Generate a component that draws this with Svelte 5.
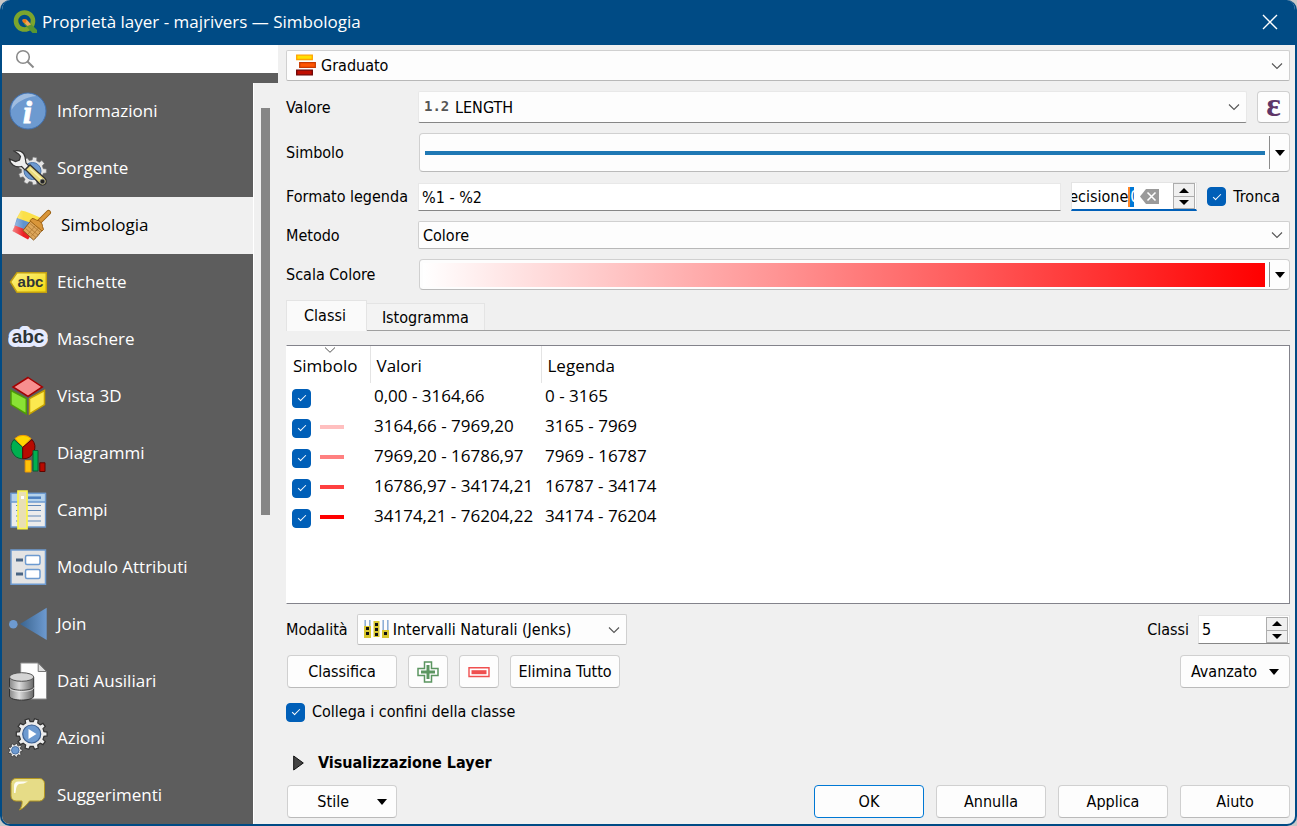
<script>
  const pages = [
    { id: "info", label: "Informazioni" },
    { id: "source", label: "Sorgente" },
    { id: "symbology", label: "Simbologia" },
    { id: "labels", label: "Etichette" },
    { id: "masks", label: "Maschere" },
    { id: "view3d", label: "Vista 3D" },
    { id: "diagrams", label: "Diagrammi" },
    { id: "fields", label: "Campi" },
    { id: "form", label: "Modulo Attributi" },
    { id: "joins", label: "Join" },
    { id: "aux", label: "Dati Ausiliari" },
    { id: "actions", label: "Azioni" },
    { id: "display", label: "Suggerimenti" },
  ];

  let current = $state("symbology");
  let tab = $state("classi");
  let search = $state("");
  let legendFormat = $state("%1 - %2");
  let precision = $state("0");
  let trim = $state(true);
  let linkBounds = $state(true);
  let classCount = $state(5);

  let classes = $state([
    { on: true, color: "#ffffff", values: "0,00 - 3164,66", legend: "0 - 3165" },
    { on: true, color: "#ffbfbf", values: "3164,66 - 7969,20", legend: "3165 - 7969" },
    { on: true, color: "#ff8080", values: "7969,20 - 16786,97", legend: "7969 - 16787" },
    { on: true, color: "#ff4040", values: "16786,97 - 34174,21", legend: "16787 - 34174" },
    { on: true, color: "#ff0000", values: "34174,21 - 76204,22", legend: "34174 - 76204" },
  ]);

  // outline of a cog with flat teeth
  function gear(cx, cy, outer, inner, teeth) {
    const pts = [];
    const step = (Math.PI * 2) / teeth;
    for (let i = 0; i < teeth; i++) {
      const a = i * step;
      for (const [k, r] of [[-0.3, inner], [-0.2, outer], [0.2, outer], [0.3, inner]]) {
        const t = a + k * step;
        pts.push(`${(cx + r * Math.cos(t)).toFixed(2)},${(cy + r * Math.sin(t)).toFixed(2)}`);
      }
    }
    return pts.join(" ");
  }
</script>

{#snippet chevron()}
  <svg class="chevron" viewBox="0 0 12 8" aria-hidden="true">
    <path d="M1 1.5 6 6.5 11 1.5" fill="none" stroke="#555" stroke-width="1.1" />
  </svg>
{/snippet}

{#snippet caret()}
  <svg class="caret" viewBox="0 0 10 6" aria-hidden="true"><path d="M0 0h10L5 6z" fill="#000" /></svg>
{/snippet}

{#snippet spinButtons(up, down)}
  <span class="spin-buttons">
    <button type="button" aria-label="Aumenta" onclick={up}>
      <svg viewBox="0 0 10 5" aria-hidden="true"><path d="M0 5h10L5 0z" /></svg>
    </button>
    <button type="button" aria-label="Diminuisci" onclick={down}>
      <svg viewBox="0 0 10 5" aria-hidden="true"><path d="M0 0h10L5 5z" /></svg>
    </button>
  </span>
{/snippet}

{#snippet pageIcon(id)}
  <svg class="page-icon" viewBox="0 0 40 41" aria-hidden="true">
    {#if id === "info"}
      <circle cx="20" cy="20" r="18" fill="#6d9ad0" stroke="#4272b0" />
      <path d="M3.5 19a16.5 16.5 0 0 1 25-14C18 6 8 11 3.5 19z" fill="#fff" opacity=".35" />
      <text x="19.5" y="32" text-anchor="middle" class="info-letter">i</text>
    {:else if id === "source"}
      <polygon points={gear(24.5, 23, 14, 11, 9)} fill="#e4e4e4" stroke="#777" stroke-width=".6" />
      <circle cx="24.5" cy="23" r="8.5" fill="#6d9ad0" stroke="#4b74a8" />
      <path d="M6 3c5-1.5 10 1 11 6l1 6 3 3-4 4-3.5-3.500C7 20 2 16 1.5 11l6 2.500 4-1.500 1-3.500-2-2.500z" fill="#eee" stroke="#333" stroke-width="1.2" />
      <path d="M17.5 21.5l4.500-4.500 15 13.500c2 2 1.500 5-.5 6s-4 .5-5-.8z" fill="#eadb7b" stroke="#333" stroke-width="1.3" />
      <path d="M22 20.5 34 31.5" stroke="#f8f0b0" stroke-width="1.5" />
      <circle cx="34.5" cy="33.5" r="2.3" fill="#222" stroke="#777" />
    {:else if id === "symbology"}
      <defs>
        <linearGradient id="flagFade"><stop offset="0" stop-color="#fff" stop-opacity=".45" /><stop offset=".4" stop-color="#fff" stop-opacity="0" /></linearGradient>
      </defs>
      <path d="M9 5.5c6 1 12 4 19 7l-3 9L4.500 13.500z" fill="#fbe04a" />
      <path d="M5 13l20 7-5 9L2.500 21z" fill="#5f93cf" />
      <path d="M3 20.5l18 7-5 7L.5 26z" fill="#ec2024" />
      <path d="M9 5.5c6 1 12 4 19 7L16 34.500.5 26z" fill="url(#flagFade)" />
      <path d="M25 19 36.5 7.5" stroke="#9a5f10" stroke-width="5" stroke-linecap="round" />
      <path d="M25 19 36.5 7.5" stroke="#d9963a" stroke-width="3.2" stroke-linecap="round" />
      <path d="M19 15.5 30.5 25c-3 3-5 7-9 10L11 25.500z" fill="#dda75c" stroke="#8a5a1c" />
      <path d="M20 13.5c3 0 4 2 6 2s5 4 4.500 6l1 3-1.500 1.500L18 15.800z" fill="#d9963a" stroke="#9a5f10" />
      <path d="M18 18.5 28 27M15.5 21 26 30M13.5 23.5 24 32.5M16 29l8-9M19 31.5l8-9" stroke="#a9732c" stroke-width=".7" />
    {:else if id === "labels"}
      <defs>
        <linearGradient id="tagFill" x2="1" y2="1"><stop stop-color="#fff38a" /><stop offset="1" stop-color="#f2d80a" /></linearGradient>
      </defs>
      <path d="M2.5 20 9 10.700h29.300v19.600H9z" fill="url(#tagFill)" stroke="#c3a010" stroke-width="1.5" />
      <text x="22.5" y="24.5" text-anchor="middle" class="abc small-abc">abc</text>
    {:else if id === "masks"}
      <text x="20" y="24" text-anchor="middle" class="abc mask-halo">abc</text>
      <text x="20" y="24" text-anchor="middle" class="abc">abc</text>
    {:else if id === "view3d"}
      <path d="M3 14.5 18.3 22.700V38L3 28.700z" fill="#8ae234" stroke="#4e9a06" stroke-width="1.5" />
      <path d="M36.5 14.5 21.5 22.700V38l15-9.300z" fill="#fce94f" stroke="#c4a000" stroke-width="1.5" />
      <path d="M20 1.5 34.3 11 20 20.300 5 11z" fill="#f78f8f" stroke="#a40000" stroke-width="1.5" />
    {:else if id === "diagrams"}
      <path d="M14.7 14.3 7 5.500a11.700 11.700 0 0 1 16 0z" fill="#ffd700" stroke="#f29b00" />
      <path d="M14.7 14.3 6 6.500a11.700 11.700 0 0 0 8.500 19.300z" fill="#00b050" stroke="#0a5c30" />
      <path d="M14.7 14.3 24 6.500a11.700 11.700 0 0 1-9.300 19.300z" fill="#b80a00" stroke="#5c0500" />
      <path d="M17.2 27.5h5.800v11.500h-5.800z" fill="#ffc20a" stroke="#f29b00" />
      <path d="M25 17.5h5v20.500h-5z" fill="#00b050" stroke="#0a5c30" />
      <path d="M31.8 29.8h5.200v8.700h-5.200z" fill="#b80a00" stroke="#5c0500" />
    {:else if id === "fields"}
      <path d="M3 3.3h34.500v33.700H3z" fill="#ececec" stroke="#6d9ad0" stroke-width="1.3" />
      <path d="M3 3.3h34.500v8.700H3z" fill="#b4d2ec" stroke="#6d9ad0" stroke-width="1.3" />
      <path d="M20 7.7h13" stroke="#4d80c0" stroke-width="2.5" />
      <path d="M8 15.5h25M8 20.5h25M8 26h25M8 31h25" stroke="#6088b8" stroke-width="1.2" />
      <path d="M10 1h9v37.700h-9z" fill="#e9dfb4" stroke="#fbf54b" stroke-width="1.7" />
      <path d="M13 6h3v3h-3z" fill="#fff" />
    {:else if id === "form"}
      <path d="M3 3h34.500v34.300H3z" fill="#e4e4e4" stroke="#6d9ad0" stroke-width="1.5" />
      <path d="M8 13h7M8 27h7" stroke="#4a6583" stroke-width="3" />
      <rect x="17.5" y="8.5" width="14.5" height="9" rx="1.5" fill="#fff" stroke="#6d9ad0" stroke-width="1.5" />
      <rect x="17.5" y="22.5" width="14.5" height="9" rx="1.5" fill="#fff" stroke="#6d9ad0" stroke-width="1.5" />
    {:else if id === "joins"}
      <defs>
        <linearGradient id="joinFill"><stop stop-color="#3a648f" /><stop offset="1" stop-color="#6d9ad0" /></linearGradient>
      </defs>
      <circle cx="5.3" cy="20.3" r="4.3" fill="#6d9ad0" />
      <path d="M12 20 38.7 3.700V36z" fill="url(#joinFill)" />
    {:else if id === "aux"}
      <defs>
        <linearGradient id="dbFill"><stop stop-color="#888" /><stop offset=".4" stop-color="#ddd" /><stop offset="1" stop-color="#666" /></linearGradient>
      </defs>
      <path d="M12.7 2h17.500L38.5 10.500V38H12.700z" fill="#fdfdfd" stroke="#8a8a8a" />
      <path d="M30.2 2v8.500h8.300z" fill="#ddd" stroke="#777" />
      <path d="M1.5 16v19c0 5.500 24.200 5.500 24.200 0V16z" fill="url(#dbFill)" stroke="#333" />
      <ellipse cx="13.6" cy="16" rx="12.1" ry="4.3" fill="#d4d4d4" stroke="#555" />
      <path d="M1.5 25.5c0 5 24.200 5 24.200 0" fill="none" stroke="#444" />
      <path d="M1.5 26.7c0 5 24.200 5 24.200 0" fill="none" stroke="#eee" stroke-width=".8" />
    {:else if id === "actions"}
      <polygon points={gear(23.7, 16, 15.5, 12.5, 10)} fill="#ececec" stroke="#333" stroke-width="1.2" />
      <circle cx="23.7" cy="16" r="9" fill="#6d9ad0" stroke="#3a5f92" stroke-width="1.2" />
      <path d="M20.5 11v10l8-5z" fill="#fff" />
      <polygon points={gear(7.3, 32.3, 7, 5.5, 9)} fill="#ececec" stroke="#333" stroke-width=".8" />
      <circle cx="7.3" cy="32.3" r="3.8" fill="#6d9ad0" stroke="#3a5f92" stroke-width=".8" />
    {:else if id === "display"}
      <path d="M8 3.5h23.500a5 5 0 0 1 5 5V21a5 5 0 0 1-5 5H21.500c-2.500 3.500-5.500 7-10 9 2-3 3-6 2.500-9H8a5 5 0 0 1-5-5V8.500a5 5 0 0 1 5-5z" fill="#e6dc87" stroke="#b39722" />
      <path d="M6 18V11q0-4.500 4.500-4.500h9.500q-4 2.500-9 2.500Q8 10 7.500 18z" fill="#fff" opacity=".9" />
    {/if}
  </svg>
{/snippet}

<div class="window">
  <header class="titlebar">
    <svg class="logo" viewBox="0 0 24 24" aria-hidden="true">
      <circle cx="11.5" cy="11" r="8.5" fill="none" stroke="#7ba52d" stroke-width="4.6" />
      <path d="M11 10.5 14.5 10.5 24 20v3h-4.500L11 14z" fill="#589632" />
      <path d="M9.5 9.5h4l4.500 5-3.500 1.500-5-5z" fill="#f0a35c" />
      <circle cx="11.5" cy="11" r="2" fill="#ee7913" />
    </svg>
    <h1>Proprietà layer - majrivers — Simbologia</h1>
    <button type="button" class="close" aria-label="Chiudi">
      <svg viewBox="0 0 16 16" aria-hidden="true"><path d="M1 1 15 15M15 1 1 15" stroke="#fff" stroke-width="1.4" /></svg>
    </button>
  </header>

  <div class="body">
    <aside>
      <label class="search">
        <svg viewBox="0 0 20 20" aria-hidden="true">
          <circle cx="8" cy="8" r="6.3" fill="none" stroke="#8a8a8a" stroke-width="1.6" />
          <path d="M12.5 12.5 18.5 18.5" stroke="#8a8a8a" stroke-width="2" />
        </svg>
        <input type="text" aria-label="Cerca" bind:value={search} />
      </label>
      <div class="list-area">
        <nav>
          {#each pages as page}
            <button
              type="button"
              class="page"
              class:selected={current === page.id}
              onclick={() => (current = page.id)}
            >
              {@render pageIcon(page.id)}
              <span>{page.label}</span>
            </button>
          {/each}
        </nav>
        <div class="scrollbar"><div class="thumb"></div></div>
      </div>
    </aside>

    <main>
      <div class="combo renderer">
        <svg class="combo-icon renderer-icon" viewBox="0 0 20 22" aria-hidden="true">
          <path d="M.7 1.2h15.600v4.300H.7z" fill="#ffe000" stroke="#ffa200" stroke-width="1.3" />
          <path d="M3.7 8.7h15.600v4.600H3.700z" fill="#ff5500" stroke="#c63a00" stroke-width="1.3" />
          <path d="M.7 16.2h15.600v4.600H.7z" fill="#c00d00" stroke="#6e0000" stroke-width="1.3" />
        </svg>
        <select aria-label="Tipo di simbolo"><option>Graduato</option></select>
        {@render chevron()}
      </div>

      <div class="form">
        <label class="label" for="value">Valore</label>
        <div class="row value-row">
          <div class="combo underlined">
            <span class="combo-icon type-icon" aria-hidden="true">1.2</span>
            <select id="value"><option>LENGTH</option></select>
            {@render chevron()}
          </div>
          <button type="button" class="btn epsilon" aria-label="Espressione">ε</button>
        </div>

        <span class="label">Simbolo</span>
        <div class="split symbol">
          <button type="button" class="preview" aria-label="Simbolo"><span class="line"></span></button>
          <button type="button" class="drop" aria-label="Menu simbolo">{@render caret()}</button>
        </div>

        <label class="label" for="legend">Formato legenda</label>
        <div class="row">
          <input id="legend" class="field" type="text" bind:value={legendFormat} />
          <div class="spin precision">
            <div class="precision-text">
              <label for="precision">Precisione</label>
              <input id="precision" type="text" bind:value={precision} />
            </div>
            <button type="button" class="clear" aria-label="Azzera">
              <svg viewBox="0 0 19 15" aria-hidden="true">
                <path d="M6 0h13v15H6L0 7.5z" fill="#9a9a9a" />
                <path d="M7.5 3.5l8 8M15.5 3.5l-8 8" stroke="#fff" stroke-width="1.6" />
              </svg>
            </button>
            {@render spinButtons(() => (precision = String(+precision + 1)), () => (precision = String(+precision - 1)))}
          </div>
          <label class="check trim"><input type="checkbox" bind:checked={trim} />Tronca</label>
        </div>

        <label class="label" for="method">Metodo</label>
        <div class="combo method">
          <select id="method"><option>Colore</option></select>
          {@render chevron()}
        </div>

        <span class="label">Scala Colore</span>
        <div class="split ramp">
          <button type="button" class="preview" aria-label="Scala Colore"><span class="gradient"></span></button>
          <button type="button" class="drop" aria-label="Menu scala colore">{@render caret()}</button>
        </div>
      </div>

      <div class="tabs" role="tablist">
        <button type="button" role="tab" aria-selected={tab === "classi"} onclick={() => (tab = "classi")}>Classi</button>
        <button type="button" role="tab" aria-selected={tab === "isto"} onclick={() => (tab = "isto")}>Istogramma</button>
      </div>

      <div class="table-box">
        <table>
          <thead>
            <tr>
              <th class="col-symbol">
                Simbolo
                <svg class="sort" viewBox="0 0 12 6" aria-hidden="true"><path d="M1 .5 6 5.3 11 .5" fill="none" stroke="#555" /></svg>
              </th>
              <th class="col-values">Valori</th>
              <th>Legenda</th>
            </tr>
          </thead>
          <tbody>
            {#each classes as c}
              <tr>
                <td>
                  <div class="symbol-cell">
                    <input type="checkbox" aria-label={c.legend} bind:checked={c.on} />
                    <span class="swatch" style="background: {c.color}"></span>
                  </div>
                </td>
                <td>{c.values}</td>
                <td>{c.legend}</td>
              </tr>
            {/each}
          </tbody>
        </table>
      </div>

      <div class="row mode-row">
        <label for="mode">Modalità</label>
        <div class="combo mode">
          <svg class="combo-icon mode-icon" viewBox="0 0 25 19" aria-hidden="true">
            <path d="M1.2 0v6M5.8 0v6M19.2 0v10M23.8 0v10" stroke="#8fb0d8" stroke-width="1.6" />
            <path d="M0 6h7v12H0zM9.5 1h6v16h-6zM18 10h7v8h-7z" fill="#d8c62e" />
            <path d="M2 7h3v3H2zM2 12h3v3H2zM11 3h3v3h-3zM11 8h3v3h-3zM11 13h3v3h-3zM20 12h3v3h-3z" fill="#111" />
          </svg>
          <select id="mode"><option>Intervalli Naturali (Jenks)</option></select>
          {@render chevron()}
        </div>
        <label class="push" for="count">Classi</label>
        <div class="spin count">
          <input id="count" type="text" bind:value={classCount} />
          {@render spinButtons(() => classCount++, () => classCount--)}
        </div>
      </div>

      <div class="row actions">
        <button type="button" class="btn wide">Classifica</button>
        <button type="button" class="btn icon-btn" aria-label="Aggiungi classe">
          <svg viewBox="0 0 22 22" aria-hidden="true">
            <path d="M7.5 1h7v6.500H21v7h-6.500V21h-7v-6.500H1v-7h6.500z" fill="#fff" stroke="#5b9560" stroke-width="1.5" />
            <path d="M11 4v14M4 11h14" stroke="#5b9560" stroke-width="3" />
          </svg>
        </button>
        <button type="button" class="btn icon-btn" aria-label="Elimina classe">
          <svg viewBox="0 0 22 22" aria-hidden="true">
            <path d="M1 6.8h20v8.700H1z" fill="#fff" stroke="#ef4f4f" stroke-width="1.4" />
            <path d="M3.5 11.2h15" stroke="#ef4f4f" stroke-width="4" />
          </svg>
        </button>
        <button type="button" class="btn wide">Elimina Tutto</button>
        <button type="button" class="btn wide push menu">Avanzato {@render caret()}</button>
      </div>

      <label class="check link"><input type="checkbox" bind:checked={linkBounds} />Collega i confini della classe</label>

      <button type="button" class="group">
        <svg viewBox="0 0 11 16" aria-hidden="true"><path d="M.7 1v14L10.3 8z" fill="#444" stroke="#111" /></svg>
        Visualizzazione Layer
      </button>

      <footer class="row actions">
        <button type="button" class="btn wide menu style">Stile {@render caret()}</button>
        <button type="button" class="btn wide push default">OK</button>
        <button type="button" class="btn wide">Annulla</button>
        <button type="button" class="btn wide">Applica</button>
        <button type="button" class="btn wide">Aiuto</button>
      </footer>
    </main>
  </div>
</div>

<style>
  :global(body) {
    margin: 0;
    background: #c8c8c8;
  }

  .window {
    --ui: "DejaVu Sans Condensed", "Noto Sans", sans-serif;
    --seg: "Open Sans", "Noto Sans", sans-serif;
    box-sizing: border-box;
    min-height: 100vh;
    display: flex;
    flex-direction: column;
    border: 2px solid #004b85;
    border-top: 0;
    border-radius: 10px;
    overflow: hidden;
    background: #f0f0f0;
    font: 16px/20px var(--ui);
    color: #000;
  }

  .window * {
    box-sizing: border-box;
  }

  button,
  input,
  select {
    font: inherit;
    color: inherit;
    margin: 0;
    padding: 0;
    border: 0;
    background: none;
    border-radius: 0;
    outline: none;
  }

  svg {
    display: block;
    flex: none;
  }

  .titlebar {
    display: flex;
    align-items: center;
    gap: 5px;
    height: 45px;
    padding: 0 17px 1px 11px;
    background: #004b85;
    color: #fff;
    font-family: var(--seg);
  }

  .logo {
    width: 24px;
    height: 24px;
  }

  h1 {
    flex: 1;
    margin: 0;
    font-size: 17px;
    font-weight: 400;
  }

  .close svg {
    width: 16px;
    height: 16px;
  }

  .body {
    flex: 1;
    display: flex;
  }

  aside {
    width: 276px;
    display: flex;
    flex-direction: column;
  }

  .search {
    display: flex;
    align-items: center;
    gap: 8px;
    height: 28px;
    padding-left: 13px;
    background: #fff;
  }

  .search svg {
    width: 20px;
    height: 20px;
  }

  .search input {
    flex: 1;
    min-width: 0;
  }

  .list-area {
    flex: 1;
    display: flex;
    border-top: 10px solid #5d5d5d;
  }

  nav {
    flex: 1;
    background: #5d5d5d;
  }

  .page {
    display: flex;
    align-items: center;
    gap: 9px;
    width: 100%;
    height: 57px;
    padding-left: 6px;
    color: #fff;
    font-family: var(--seg);
    font-size: 17px;
    text-align: left;
  }

  .page.selected {
    padding-left: 10px;
    background: #f0f0f0;
    color: #000;
  }

  .page span {
    padding-bottom: 1px;
  }

  .page-icon {
    width: 40px;
    height: 41px;
  }

  .info-letter {
    font: italic bold 32px "Liberation Serif", serif;
    fill: #fff;
    stroke: #fff;
  }

  .abc {
    font: bold 19px "Liberation Sans", sans-serif;
    fill: #2e3436;
  }

  .small-abc {
    font-size: 15px;
  }

  .mask-halo {
    stroke: #e6ebff;
    stroke-width: 8px;
    stroke-linejoin: round;
  }

  .scrollbar {
    width: 25px;
    padding: 25px 8px 0 7px;
    border-left: 1px solid #fff;
  }

  .thumb {
    height: 407px;
    background: #868686;
  }

  main {
    flex: 1;
    min-width: 0;
    display: flex;
    flex-direction: column;
    gap: 10px;
    padding: 5px 5px 6px 8px;
  }

  .form {
    display: grid;
    grid-template-columns: 132px 1fr;
    row-gap: 10px;
    align-items: center;
  }

  .label {
    padding-top: 1px;
  }

  .row {
    display: flex;
    align-items: center;
    gap: 10px;
  }

  .combo {
    position: relative;
    height: 31px;
    border: 1px solid #d0d0d0;
    border-bottom-color: #b8b8b8;
    border-radius: 2px;
    background: #fdfdfd;
  }

  .combo select {
    display: block;
    width: 100%;
    height: 100%;
    padding: 1px 30px 0 4px;
    appearance: none;
  }

  .combo.renderer select {
    padding-left: 34px;
  }

  .combo.mode select {
    padding-left: 35px;
  }

  .combo-icon {
    position: absolute;
    pointer-events: none;
  }

  .renderer-icon {
    left: 9px;
    top: 3px;
    width: 20px;
    height: 22px;
  }

  .type-icon {
    left: 5px;
    top: 4px;
    color: #555;
    font: bold 14px/20px "DejaVu Sans Mono", monospace;
  }

  .mode-icon {
    left: 6px;
    top: 5px;
    width: 25px;
    height: 19px;
  }

  .chevron {
    position: absolute;
    right: 6px;
    top: calc(50% - 4px);
    width: 12px;
    height: 8px;
    pointer-events: none;
  }

  .combo.underlined {
    flex: 1;
    height: 32px;
    border-color: #e8e8e8;
    border-bottom-color: #868686;
  }

  .combo.underlined select {
    padding-left: 36px;
  }

  .combo.method {
    height: 28px;
  }

  .btn {
    height: 33px;
    padding-top: 1px;
    border: 1px solid #d0d0d0;
    border-bottom-color: #bababa;
    border-radius: 4px;
    background: #fdfdfd;
    text-align: center;
  }

  .btn.wide {
    width: 110px;
  }

  .btn.default {
    border-color: #0078d4;
  }

  .btn.epsilon {
    width: 33px;
    height: 32px;
    padding: 0 0 4px;
    color: #5f3668;
    font: bold 34px/24px "Liberation Serif", serif;
  }

  .split {
    display: flex;
    margin-left: 1px;
    border: 1px solid #d0d0d0;
    border-bottom-color: #bababa;
    border-radius: 4px;
    background: #fdfdfd;
  }

  .symbol {
    height: 39px;
    padding: 2px 0;
  }

  .ramp {
    height: 31px;
    padding: 2px 0;
  }

  .preview {
    flex: 1;
    display: flex;
    align-items: center;
    padding: 0 4px 0 3px;
  }

  .line {
    flex: 1;
    height: 4px;
    margin-left: 2px;
    background: #1f78b4;
  }

  .gradient {
    flex: 1;
    height: 24px;
    background: linear-gradient(90deg, #fff, #f00);
  }

  .drop {
    width: 20px;
    border-left: 1px solid #8c8c8c;
  }

  .caret {
    width: 10px;
    height: 6px;
  }

  .drop .caret {
    margin: 0 auto;
  }

  .field {
    flex: 1;
    min-width: 0;
    height: 28px;
    padding: 1px 4px 0 3px;
    border: 1px solid #e8e8e8;
    border-bottom-color: #868686;
    background: #fff;
  }

  .spin {
    display: flex;
    align-items: center;
    height: 29px;
    border: 1px solid #e4e4e4;
    border-bottom-color: #868686;
    background: #fff;
  }

  .spin-buttons {
    flex: none;
    display: flex;
    flex-direction: column;
    width: 22px;
    margin-right: 1px;
    border: 1px solid #adadad;
    background: #f0f0f0;
  }

  .spin-buttons button {
    display: grid;
    place-items: center;
    height: 12px;
  }

  .spin-buttons button + button {
    border-top: 1px solid #adadad;
  }

  .spin-buttons svg {
    width: 10px;
    height: 5px;
  }

  .precision {
    width: 126px;
    border-bottom: 2px solid #005fb8;
  }

  .precision-text {
    flex: 1;
    min-width: 0;
    display: flex;
    justify-content: flex-end;
    overflow: hidden;
    padding-top: 2px;
  }

  .precision input {
    flex: none;
    width: 6px;
    height: 20px;
    border-left: 2px solid #ff8728;
    background: #0078d7;
    color: #fff;
  }

  .clear {
    margin: 0 14px 0 6px;
  }

  .clear svg {
    width: 19px;
    height: 15px;
  }

  .count {
    width: 92px;
  }

  .count input {
    flex: 1;
    min-width: 0;
    padding-left: 3px;
  }

  .check {
    display: flex;
    align-items: center;
    gap: 7px;
  }

  .trim {
    padding-right: 10px;
  }

  input[type="checkbox"] {
    appearance: none;
    display: grid;
    place-items: center;
    flex: none;
    width: 19px;
    height: 19px;
    border: 1px solid #868686;
    border-radius: 4px;
    background: #fff;
  }

  input[type="checkbox"]:checked {
    border-color: #005fb8;
    background: #005fb8;
  }

  input[type="checkbox"]:checked::before {
    content: "";
    width: 7px;
    height: 3px;
    margin-bottom: 2px;
    border: solid #fff;
    border-width: 0 0 1px 1px;
    transform: rotate(-45deg);
  }

  .tabs {
    display: flex;
    align-items: flex-end;
    height: 31px;
    margin-bottom: 4px;
    background: linear-gradient(#a0a0a0, #a0a0a0) 0 30px / 100% 1px no-repeat;
  }

  .tabs button {
    height: 27px;
    margin-bottom: 1px;
    padding: 1px 15px 0;
    border: 1px solid #e4e4e4;
    border-width: 1px 1px 0 0;
    background: #f3f3f3;
  }

  .tabs button[aria-selected="true"] {
    height: 31px;
    margin-bottom: 0;
    padding: 0 20px 0 17px;
    border-left-width: 1px;
    background: #fafafa;
  }

  .table-box {
    flex: 1;
    border: 1px solid #83838b;
    border-left-color: #fff;
    background: #fff;
    font-family: var(--seg);
    font-size: 17px;
  }

  table {
    width: 100%;
    table-layout: fixed;
    border-collapse: collapse;
  }

  th {
    position: relative;
    height: 37px;
    padding: 2px 6px 0;
    border-right: 1px solid #e4e4e4;
    font-weight: 400;
    text-align: left;
  }

  th:last-child {
    border-right: 0;
  }

  .col-symbol {
    width: 83px;
  }

  .col-values {
    width: 171px;
  }

  .sort {
    position: absolute;
    left: 37px;
    top: 1px;
    width: 12px;
    height: 6px;
  }

  td {
    height: 30px;
    padding: 0 4px 4px;
    white-space: nowrap;
  }

  .symbol-cell {
    display: flex;
    align-items: center;
    gap: 9px;
    padding: 4px 0 0 1px;
  }

  .swatch {
    width: 24px;
    height: 4px;
    margin-bottom: 2px;
  }

  .mode-row {
    gap: 9px;
  }

  .mode-row .combo {
    width: 270px;
  }

  .push {
    margin-left: auto;
  }

  .actions {
    gap: 11px;
    padding-left: 1px;
  }

  footer.actions {
    gap: 12px;
  }

  .icon-btn {
    display: grid;
    place-items: center;
    width: 40px;
  }

  .icon-btn svg {
    width: 22px;
    height: 22px;
  }

  .menu {
    display: flex;
    align-items: center;
    justify-content: center;
    gap: 12px;
  }

  .style {
    justify-content: flex-end;
    gap: 28px;
    padding-right: 9px;
  }

  .link {
    height: 28px;
  }

  .group {
    display: flex;
    align-items: center;
    gap: 14px;
    height: 24px;
    margin-top: 15px;
    padding-left: 7px;
    font-weight: 700;
  }

  .group svg {
    width: 11px;
    height: 16px;
  }
</style>
